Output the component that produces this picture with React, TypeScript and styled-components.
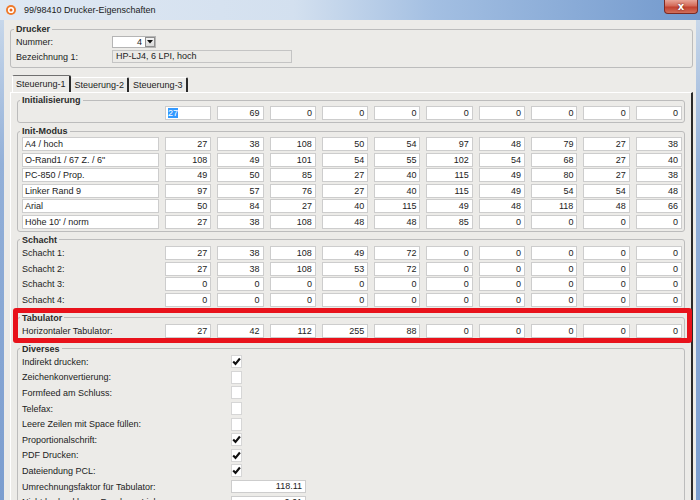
import React from "react";
import styled, { createGlobalStyle } from "styled-components";

const GlobalStyle = createGlobalStyle`
  html, body {
    margin: 0;
    padding: 0;
  }
  body {
    background: #ecebe8;
    font-family: "Liberation Sans", Arial, sans-serif;
  }
`;

const Window = styled.div`
  width: 700px;
  height: 500px;
  overflow: hidden;
  display: flex;
  flex-direction: column;
  background: #ecebe8;
  color: #222;
  font-size: 9px;
`;

const TitleBar = styled.div`
  height: 20px;
  flex: none;
  display: flex;
  align-items: flex-start;
  background: linear-gradient(90deg, #dfe8f3 0%, #d3e0ef 42%, #a3bfe2 62%, #7299cd 100%);
`;

const AppIcon = styled.svg`
  flex: none;
  margin: 5px 0 0 6px;
`;

const Title = styled.span`
  margin: 4px 0 0 8px;
  font-family: "Liberation Sans", Arial, sans-serif;
  font-size: 9px;
  line-height: 12px;
  color: #1b1b1b;
`;

const CloseButton = styled.div`
  margin-left: auto;
  margin-right: 2px;
  width: 34px;
  height: 14px;
  box-sizing: border-box;
  display: flex;
  align-items: center;
  justify-content: center;
  border: 1px solid #7d2a22;
  border-top: none;
  border-radius: 0 0 4px 4px;
  background: linear-gradient(180deg, #e8a598 0%, #d46a58 45%, #c2412f 55%, #d0705c 100%);
  color: #fff;
  font-family: "DejaVu Sans", sans-serif;
  font-weight: bold;
  font-size: 10px;
  line-height: 10px;
  text-shadow: 0 0 2px #5a1a12;
`;

const Body = styled.div`
  flex: 1;
  min-height: 0;
  display: flex;
`;

const Frame = styled.div<{ $width: number }>`
  flex: none;
  width: ${(p) => p.$width}px;
  background: linear-gradient(180deg, #c7d7ea 0%, #93b0d8 30%, #7b9dcf 100%);
`;

const Content = styled.div`
  flex: 1;
  min-width: 0;
  display: flex;
  flex-direction: column;
  padding: 4px 3px 0 6px;
`;

const Group = styled.fieldset`
  margin: 0;
  min-width: 0;
  padding: 1px 2px 2px 4px;
  border: 1px solid #bcbcbc;
  border-radius: 3px;
`;

const PrinterGroup = styled(Group)`
  padding: 1px 5px 4px 5px;
`;

const Legend = styled.legend`
  padding: 0 2px;
  margin-left: -2px;
  font-weight: bold;
  line-height: 10px;
  color: #2b2b2b;
`;

const PrinterGrid = styled.div`
  display: grid;
  grid-template-columns: 96px auto;
  grid-auto-rows: 13px;
  row-gap: 2px;
  align-items: center;
`;

const Combo = styled.div`
  width: 44px;
  height: 12px;
  box-sizing: border-box;
  display: flex;
  align-items: center;
  justify-content: flex-end;
  background: #fff;
  border: 1px solid #b5b5b5;
`;

const ComboValue = styled.span`
  padding-right: 3px;
`;

const ComboArrow = styled.div`
  width: 10px;
  height: 10px;
  box-sizing: border-box;
  display: flex;
  align-items: center;
  justify-content: center;
  background: linear-gradient(180deg, #f4f4f4, #dadada);
  border: 1px solid #8e8e8e;
`;

const ReadOnlyText = styled.div`
  width: 180px;
  height: 13px;
  box-sizing: border-box;
  padding-left: 3px;
  line-height: 11px;
  background: #ebeae7;
  border: 1px solid #c4c4c4;
`;

const TabRow = styled.div`
  display: flex;
  align-items: flex-end;
  height: 17px;
  margin-top: 7px;
  padding-left: 2px;
`;

const Tab = styled.div<{ $active?: boolean }>`
  height: ${(p) => (p.$active ? 16 : 14)}px;
  padding: 0 3px 0 3px;
  display: flex;
  align-items: center;
  border-top: 1px solid ${(p) => (p.$active ? "#707070" : "#fff")};
  border-left: 1px solid ${(p) => (p.$active ? "#fff" : "transparent")};
  border-right: 2px solid #2a2a2a;
  border-radius: 2px 2px 0 0;
  white-space: nowrap;
`;

const TabPanel = styled.div`
  flex: 1;
  display: flex;
  flex-direction: column;
  gap: 3px;
  padding: 2px 6px 0 6px;
  border-top: 1px solid #fff;
  border-left: 1px solid #fff;
  border-right: 2px solid #2a2a2a;
`;

const ValueGrid = styled.div`
  display: grid;
  grid-template-columns: 137px repeat(10, 1fr);
  grid-auto-rows: 14px;
  column-gap: 6px;
  row-gap: 1.6px;
  align-items: center;
`;

const Field = styled.div<{ $left?: boolean }>`
  height: 14px;
  box-sizing: border-box;
  padding: 0 3px 0 ${(p) => (p.$left ? 2 : 3)}px;
  line-height: 12px;
  text-align: ${(p) => (p.$left ? "left" : "right")};
  white-space: nowrap;
  overflow: hidden;
  background: #fff;
  border: 1px solid #cdcdcd;
`;

const Selected = styled.span`
  background: #3399ff;
  color: #fff;
`;

const RowLabel = styled.div`
  line-height: 14px;
  white-space: nowrap;
`;

const Marked = styled.div`
  position: relative;

  &::after {
    content: "";
    position: absolute;
    inset: -5px -7px -2px -4px;
    border: 5px solid #e8121b;
    border-radius: 3px;
    pointer-events: none;
  }
`;

const OptionGrid = styled.div`
  display: grid;
  grid-template-columns: 209px auto;
  grid-auto-rows: 14px;
  row-gap: 1.6px;
  align-items: center;
`;

const CheckBox = styled.div`
  width: 11px;
  height: 13px;
  box-sizing: border-box;
  display: flex;
  align-items: center;
  justify-content: center;
  background: #fff;
  border: 1px solid #d6d6d6;
`;

const NumberInput = styled(Field)`
  width: 75px;
  height: 13px;
  line-height: 11px;
`;

const initValues = [27, 69, 0, 0, 0, 0, 0, 0, 0, 0];

const initModes: [string, number[]][] = [
  ["A4 / hoch", [27, 38, 108, 50, 54, 97, 48, 79, 27, 38]],
  ["O-Rand1 / 67 Z. / 6\"", [108, 49, 101, 54, 55, 102, 54, 68, 27, 40]],
  ["PC-850 / Prop.", [49, 50, 85, 27, 40, 115, 49, 80, 27, 38]],
  ["Linker Rand 9", [97, 57, 76, 27, 40, 115, 49, 54, 54, 48]],
  ["Arial", [50, 84, 27, 40, 115, 49, 48, 118, 48, 66]],
  ["Höhe 10' / norm", [27, 38, 108, 48, 48, 85, 0, 0, 0, 0]],
];

const trays: [string, number[]][] = [
  ["Schacht 1:", [27, 38, 108, 49, 72, 0, 0, 0, 0, 0]],
  ["Schacht 2:", [27, 38, 108, 53, 72, 0, 0, 0, 0, 0]],
  ["Schacht 3:", [0, 0, 0, 0, 0, 0, 0, 0, 0, 0]],
  ["Schacht 4:", [0, 0, 0, 0, 0, 0, 0, 0, 0, 0]],
];

const tabulator = [27, 42, 112, 255, 88, 0, 0, 0, 0, 0];

type Option = { label: string; checked?: boolean; value?: string };

const options: Option[] = [
  { label: "Indirekt drucken:", checked: true },
  { label: "Zeichenkonvertierung:", checked: false },
  { label: "Formfeed am Schluss:", checked: false },
  { label: "Telefax:", checked: false },
  { label: "Leere Zeilen mit Space füllen:", checked: false },
  { label: "Proportionalschrift:", checked: true },
  { label: "PDF Drucken:", checked: true },
  { label: "Dateiendung PCL:", checked: true },
  { label: "Umrechnungsfaktor für Tabulator:", value: "118.11" },
  { label: "Nicht bedruckbarer Rand von Links, cm:", value: "0.61" },
];

const CheckMark = () => (
  <svg width="9" height="9" viewBox="0 0 9 9">
    <path d="M1.2 4.5 L3.5 7 L7.9 1.5" fill="none" stroke="#111" strokeWidth="2.1" />
  </svg>
);

const Values = ({ values }: { values: number[] }) => (
  <>
    {values.map((v, i) => (
      <Field key={i}>{v}</Field>
    ))}
  </>
);

export default function App() {
  return (
    <>
      <GlobalStyle />
      <Window>
        <TitleBar>
          <AppIcon width="10" height="10" viewBox="0 0 10 10">
            <circle cx="5" cy="5" r="5" fill="#ef7a2c" />
            <circle cx="5" cy="5" r="3.1" fill="#fff" />
            <circle cx="5" cy="5" r="1.5" fill="#e8661c" />
          </AppIcon>
          <Title>99/98410 Drucker-Eigenschaften</Title>
          <CloseButton>x</CloseButton>
        </TitleBar>
        <Body>
          <Frame $width={4} />
          <Content>
            <PrinterGroup>
              <Legend>Drucker</Legend>
              <PrinterGrid>
                <span>Nummer:</span>
                <Combo>
                  <ComboValue>4</ComboValue>
                  <ComboArrow>
                    <svg width="6" height="4" viewBox="0 0 6 4">
                      <path d="M0 0 H6 L3 3.5 Z" fill="#111" />
                    </svg>
                  </ComboArrow>
                </Combo>
                <span>Bezeichnung 1:</span>
                <ReadOnlyText>HP-LJ4, 6 LPI, hoch</ReadOnlyText>
              </PrinterGrid>
            </PrinterGroup>

            <TabRow>
              <Tab $active>Steuerung-1</Tab>
              <Tab>Steuerung-2</Tab>
              <Tab>Steuerung-3</Tab>
            </TabRow>

            <TabPanel>
              <Group>
                <Legend>Initialisierung</Legend>
                <ValueGrid>
                  <span />
                  {initValues.map((v, i) =>
                    i === 0 ? (
                      <Field key={i} $left>
                        <Selected>{v}</Selected>
                      </Field>
                    ) : (
                      <Field key={i}>{v}</Field>
                    )
                  )}
                </ValueGrid>
              </Group>

              <Group>
                <Legend>Init-Modus</Legend>
                <ValueGrid>
                  {initModes.map(([label, values]) => (
                    <React.Fragment key={label}>
                      <Field $left>{label}</Field>
                      <Values values={values} />
                    </React.Fragment>
                  ))}
                </ValueGrid>
              </Group>

              <Group>
                <Legend>Schacht</Legend>
                <ValueGrid>
                  {trays.map(([label, values]) => (
                    <React.Fragment key={label}>
                      <RowLabel>{label}</RowLabel>
                      <Values values={values} />
                    </React.Fragment>
                  ))}
                </ValueGrid>
              </Group>

              <Marked>
                <Group>
                  <Legend>Tabulator</Legend>
                  <ValueGrid>
                    <RowLabel>Horizontaler Tabulator:</RowLabel>
                    <Values values={tabulator} />
                  </ValueGrid>
                </Group>
              </Marked>

              <Group>
                <Legend>Diverses</Legend>
                <OptionGrid>
                  {options.map((o) => (
                    <React.Fragment key={o.label}>
                      <RowLabel>{o.label}</RowLabel>
                      {o.value !== undefined ? (
                        <NumberInput>{o.value}</NumberInput>
                      ) : (
                        <CheckBox>{o.checked && <CheckMark />}</CheckBox>
                      )}
                    </React.Fragment>
                  ))}
                </OptionGrid>
              </Group>
            </TabPanel>
          </Content>
          <Frame $width={4} />
        </Body>
      </Window>
    </>
  );
}
